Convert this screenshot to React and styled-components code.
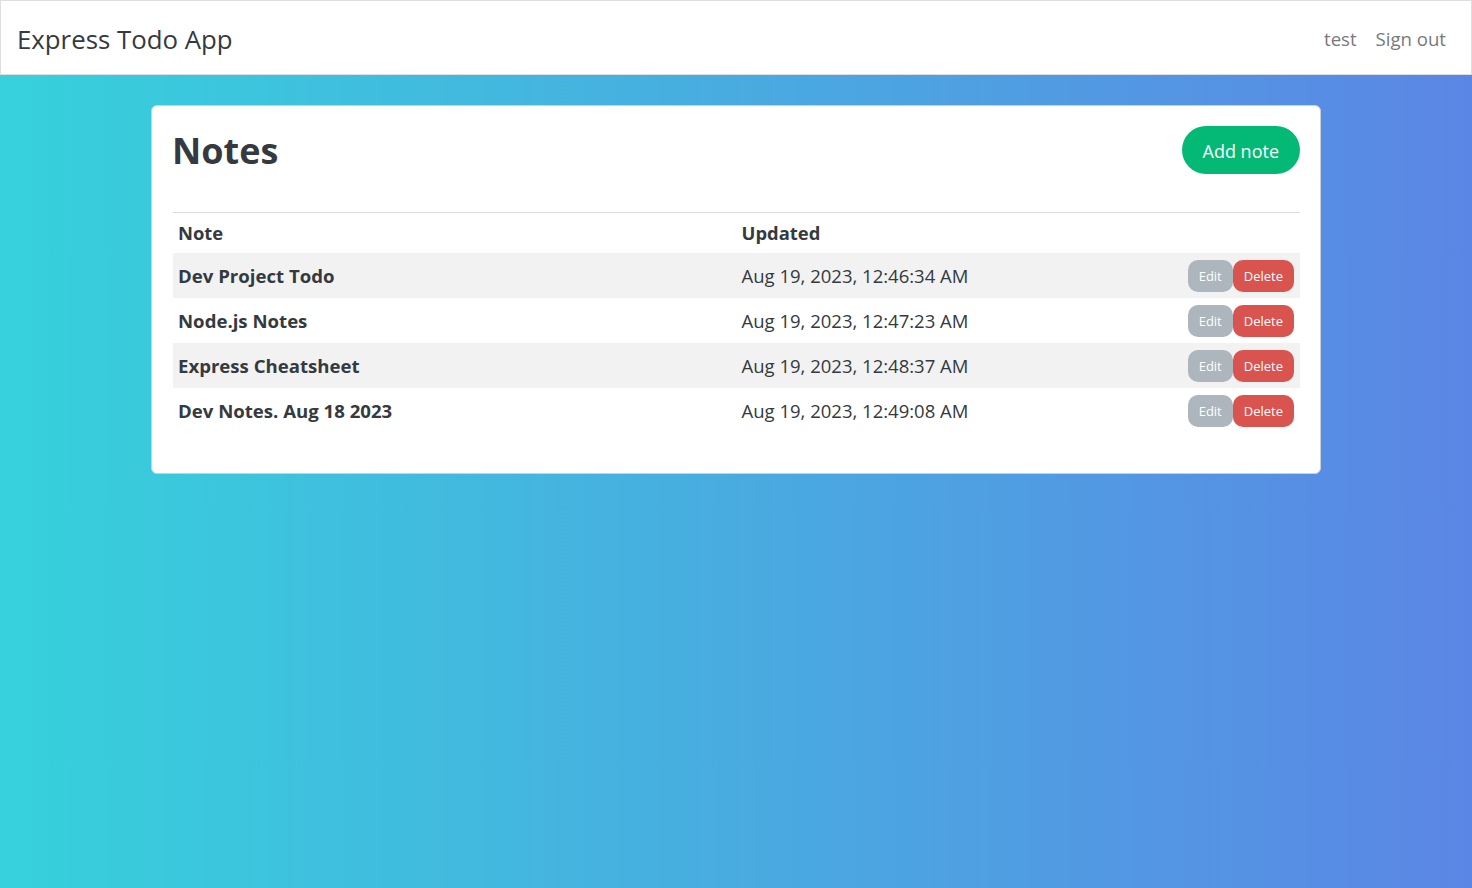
import React from 'react';
import styled, { createGlobalStyle } from 'styled-components';

const GlobalStyle = createGlobalStyle`
  body {
    margin: 0;
    font-family: "Open Sans", "Noto Sans", sans-serif;
    color: #343a40;
  }
`;

const notes = [
  { title: 'Dev Project Todo', updated: 'Aug 19, 2023, 12:46:34 AM' },
  { title: 'Node.js Notes', updated: 'Aug 19, 2023, 12:47:23 AM' },
  { title: 'Express Cheatsheet', updated: 'Aug 19, 2023, 12:48:37 AM' },
  { title: 'Dev Notes. Aug 18 2023', updated: 'Aug 19, 2023, 12:49:08 AM' },
];

const App = () => {
  return (
    <Page>
      <GlobalStyle />
      <Navbar>
        <Brand>Express Todo App</Brand>
        <NavLinks>
          <NavLink>test</NavLink>
          <NavLink>Sign out</NavLink>
        </NavLinks>
      </Navbar>
      <Main>
        <Card>
          <CardHeader>
            <Title>Notes</Title>
            <AddButton>Add note</AddButton>
          </CardHeader>
          <Table>
            <thead>
              <tr>
                <Th style={{ width: '50%' }}>Note</Th>
                <Th>Updated</Th>
                <Th />
              </tr>
            </thead>
            <tbody>
              {notes.map((note, i) => (
                <Row key={note.title} $striped={i % 2 === 0}>
                  <NoteCell>{note.title}</NoteCell>
                  <Td>{note.updated}</Td>
                  <ActionCell>
                    <Actions>
                      <SmallButton $variant="edit">Edit</SmallButton>
                      <SmallButton $variant="delete">Delete</SmallButton>
                    </Actions>
                  </ActionCell>
                </Row>
              ))}
            </tbody>
          </Table>
        </Card>
      </Main>
    </Page>
  );
};
export default App;

const Page = styled.div`
  min-height: 100vh;
  background: linear-gradient(to right, #36d1dc, #5b86e5);
`;

const Navbar = styled.nav`
  height: 75px;
  box-sizing: border-box;
  display: flex;
  align-items: center;
  justify-content: space-between;
  padding: 2px 25px 0 16px;
  background: #fff;
  border: 1px solid #dedede;
`;

const Brand = styled.div`
  font-size: 25.8px;
  color: #343a40;
`;

const NavLinks = styled.div`
  display: flex;
  gap: 19px;
`;

const NavLink = styled.a`
  font-size: 18.6px;
  color: #7a7a7a;
  cursor: pointer;
`;

const Main = styled.main`
  padding-top: 30px;
`;

const Card = styled.div`
  width: 1170px;
  box-sizing: border-box;
  margin: 0 auto;
  background: #fff;
  border: 1px solid #cfcfcf;
  border-radius: 6px;
  padding: 20px 20px 40px 21px;
`;

const CardHeader = styled.div`
  display: flex;
  align-items: center;
  justify-content: space-between;
  height: 48px;
  margin-bottom: 38px;
`;

const Title = styled.h1`
  margin: 0 0 0 -1px;
  font-size: 36px;
  font-weight: 700;
  color: #343a40;
`;

const AddButton = styled.button`
  height: 48px;
  padding: 2px 21px 0;
  border: none;
  border-radius: 24px;
  background: #04b875;
  color: #fff;
  font-family: inherit;
  font-size: 18px;
  cursor: pointer;
`;

const Table = styled.table`
  width: 100%;
  border-collapse: collapse;
  border-top: 1px solid #dcdcdc;
`;

const Th = styled.th`
  text-align: left;
  height: 40px;
  box-sizing: border-box;
  padding: 0 5px;
  font-size: 18.4px;
  font-weight: 700;
`;

const Row = styled.tr`
  background: ${(p) => (p.$striped ? '#f2f2f2' : '#fff')};
`;

const Td = styled.td`
  height: 45px;
  box-sizing: border-box;
  padding: 1px 5px 0;
  font-size: 18.5px;
`;

const NoteCell = styled(Td)`
  font-weight: 700;
  font-size: 18.6px;
`;

const ActionCell = styled(Td)`
  padding-right: 6px;
  padding-top: 2px;
`;

const Actions = styled.div`
  display: flex;
  justify-content: flex-end;
`;

const SmallButton = styled.button`
  height: 32px;
  padding: 0 11px;
  border: none;
  border-radius: 10px;
  font-family: inherit;
  font-size: 13px;
  color: #fff;
  background: ${(p) => (p.$variant === 'delete' ? '#d9534f' : '#adb5bd')};
  cursor: pointer;
`;
